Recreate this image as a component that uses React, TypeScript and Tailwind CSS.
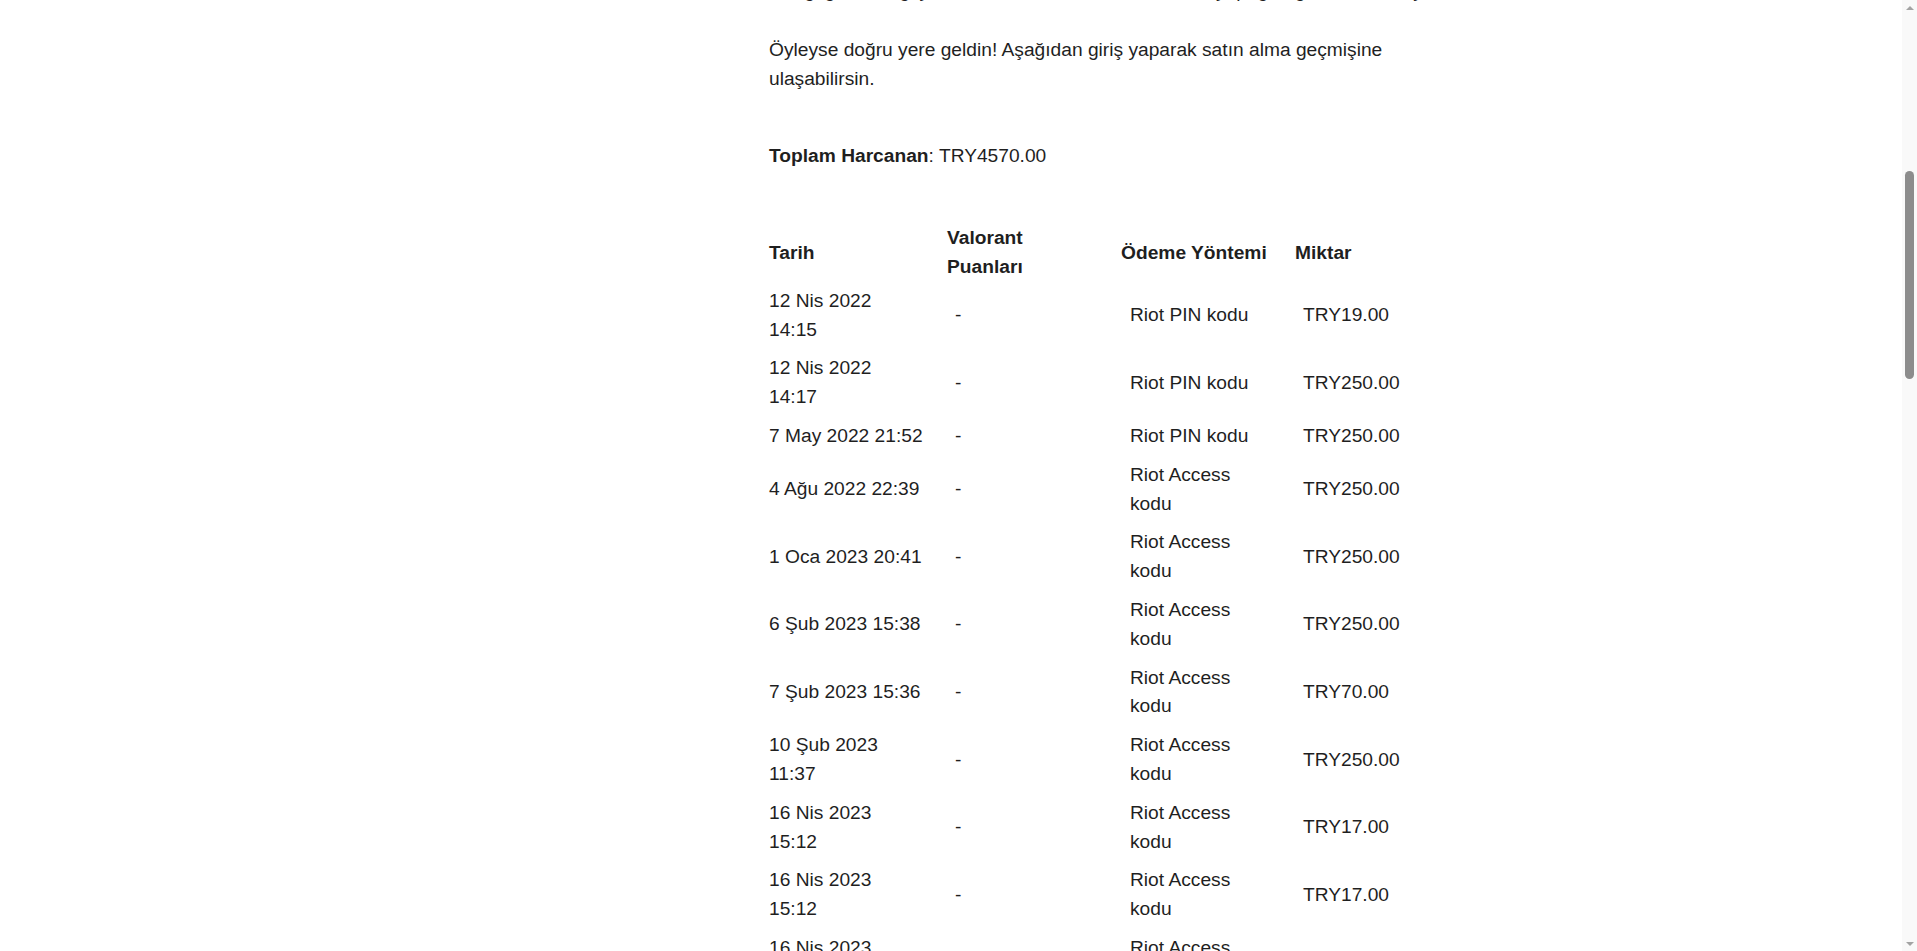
import React from 'react';

interface Purchase {
  date: string;
  time: string;
  split?: boolean;
  points: string;
  method: string[];
  amount: string;
}

const purchases: Purchase[] = [
  { date: '12 Nis 2022', time: '14:15', split: true, points: '-', method: ['Riot PIN kodu'], amount: 'TRY19.00' },
  { date: '12 Nis 2022', time: '14:17', split: true, points: '-', method: ['Riot PIN kodu'], amount: 'TRY250.00' },
  { date: '7 May 2022', time: '21:52', points: '-', method: ['Riot PIN kodu'], amount: 'TRY250.00' },
  { date: '4 Ağu 2022', time: '22:39', points: '-', method: ['Riot Access', 'kodu'], amount: 'TRY250.00' },
  { date: '1 Oca 2023', time: '20:41', points: '-', method: ['Riot Access', 'kodu'], amount: 'TRY250.00' },
  { date: '6 Şub 2023', time: '15:38', points: '-', method: ['Riot Access', 'kodu'], amount: 'TRY250.00' },
  { date: '7 Şub 2023', time: '15:36', points: '-', method: ['Riot Access', 'kodu'], amount: 'TRY70.00' },
  { date: '10 Şub 2023', time: '11:37', split: true, points: '-', method: ['Riot Access', 'kodu'], amount: 'TRY250.00' },
  { date: '16 Nis 2023', time: '15:12', split: true, points: '-', method: ['Riot Access', 'kodu'], amount: 'TRY17.00' },
  { date: '16 Nis 2023', time: '15:12', split: true, points: '-', method: ['Riot Access', 'kodu'], amount: 'TRY17.00' },
  { date: '16 Nis 2023', time: '15:13', split: true, points: '-', method: ['Riot Access', 'kodu'], amount: 'TRY17.00' },
  { date: '2 May 2023', time: '19:04', points: '-', method: ['Riot Access', 'kodu'], amount: 'TRY250.00' },
];

function Scrollbar() {
  return (
    <div className="flex h-screen w-[15px] shrink-0 flex-col items-center bg-[#f9f9f9]">
      <div className="flex h-[15px] w-full items-center justify-center">
        <div className="h-0 w-0 border-x-[4px] border-b-[4px] border-x-transparent border-b-[#a3a3a3]" />
      </div>
      <div className="mt-[156px] h-[208px] w-[9px] rounded-full bg-[#8c8c8c]" />
      <div className="flex-1" />
      <div className="flex h-[15px] w-full items-center justify-center">
        <div className="h-0 w-0 border-x-[4px] border-t-[4px] border-x-transparent border-t-[#a3a3a3]" />
      </div>
    </div>
  );
}

function PurchaseTable() {
  return (
    <table className="w-[720px] table-fixed border-collapse text-left">
      <thead>
        <tr>
          <th className="w-[178px] p-0 align-middle font-bold">Tarih</th>
          <th className="w-[174px] p-0 align-middle font-bold">
            Valorant
            <br />
            Puanları
          </th>
          <th className="w-[174px] p-0 align-middle font-bold">Ödeme Yöntemi</th>
          <th className="p-0 align-middle font-bold">Miktar</th>
        </tr>
      </thead>
      <tbody>
        {purchases.map((p, i) => (
          <tr key={i}>
            <td className="py-[5px] pl-0 align-middle">
              {p.split ? (
                <>
                  {p.date}
                  <br />
                  {p.time}
                </>
              ) : (
                `${p.date} ${p.time}`
              )}
            </td>
            <td className="py-[5px] pl-[8px] align-middle">{p.points}</td>
            <td className="py-[5px] pl-[9px] align-middle">
              {p.method.map((line, j) => (
                <React.Fragment key={j}>
                  {j > 0 && <br />}
                  {line}
                </React.Fragment>
              ))}
            </td>
            <td className="py-[5px] pl-[8px] align-middle">{p.amount}</td>
          </tr>
        ))}
      </tbody>
    </table>
  );
}

export default function App() {
  return (
    <div className="flex h-screen overflow-hidden bg-white text-[#1f1f1f] [font-family:'Liberation_Sans',Arial,sans-serif]">
      <div className="flex min-w-0 flex-1 overflow-hidden">
        <div className="w-[769px] shrink-0" />
        <main className="mt-[-51.5px] w-[720px] shrink-0 text-[19.2px] leading-[28.8px]">
          <p className="mb-[29.8px]">
            Valorant hesabında bugüne kadar ne kadar harcama yaptığını merak ediyor musun?
            <br />
            Hangi gün, hangi yöntemle ve ne kadarlık satın alım yaptığını görmek mi istiyorsun?
          </p>
          <p>
            Öyleyse doğru yere geldin! Aşağıdan giriş yaparak satın alma geçmişine ulaşabilirsin.
          </p>
          <p className="mt-[48.5px]">
            <strong className="font-bold">Toplam Harcanan</strong>: TRY4570.00
          </p>
          <div className="mt-[53.5px]">
            <PurchaseTable />
          </div>
        </main>
      </div>
      <Scrollbar />
    </div>
  );
}
